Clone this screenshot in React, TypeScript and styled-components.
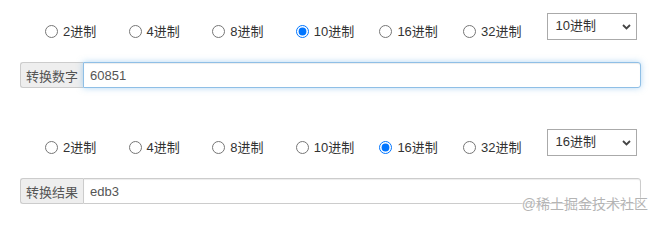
import { useState } from 'react';
import styled, { createGlobalStyle } from 'styled-components';

const GlobalStyle = createGlobalStyle`
  body {
    margin: 0;
    background: #fff;
    font-family: 'Liberation Sans', 'Noto Sans CJK SC', sans-serif;
    font-size: 13px;
    color: #333;
  }
`;

const bases = [2, 4, 8, 10, 16, 32];

const SPage = styled.div`
  position: relative;
  width: 659px;
  height: 225px;
  box-sizing: border-box;
  padding: 13px 18px 0 20px;
`;

const SBlock = styled.section<{ $offset: number }>`
  margin-top: ${(p) => p.$offset}px;
`;

const SOptionRow = styled.div`
  display: flex;
  align-items: center;
  height: 27px;
`;

const SRadioGroup = styled.div`
  display: grid;
  grid-template-columns: repeat(6, 83.6px);
  padding-left: 25px;
  margin-top: 10px;
`;

const SRadioLabel = styled.label`
  display: flex;
  align-items: center;
  gap: 5px;
  line-height: 18px;
  white-space: nowrap;
  cursor: pointer;
`;

const SRadio = styled.input`
  width: 13px;
  height: 13px;
  margin: 0;
`;

const SSelectWrap = styled.div`
  position: relative;
  width: 90px;
  height: 27px;
`;

const SSelect = styled.select`
  appearance: none;
  width: 100%;
  height: 100%;
  box-sizing: border-box;
  border: 1px solid #aaa;
  border-radius: 0;
  padding: 0 20px 3px 8px;
  background: #fff;
  color: #333;
  font-family: inherit;
  font-size: 13px;
  outline: none;
`;

const SChevron = styled.svg`
  position: absolute;
  right: 6px;
  top: 11px;
  width: 9px;
  height: 6px;
  pointer-events: none;
`;

const SInputGroup = styled.div`
  display: flex;
  height: 26px;
  margin-top: 22px;
`;

const SAddon = styled.span`
  display: flex;
  align-items: center;
  padding: 0 5px;
  background: #eee;
  border: 1px solid #ccc;
  border-right: none;
  border-radius: 3px 0 0 3px;
  color: #555;
  white-space: nowrap;
`;

const SInput = styled.input<{ $focused?: boolean }>`
  flex: 1;
  min-width: 0;
  box-sizing: border-box;
  height: 100%;
  padding: 0 6px;
  border: 1px solid ${(p) => (p.$focused ? '#8fbfe6' : '#ccc')};
  border-radius: 0 3px 3px 0;
  color: #555;
  font-family: inherit;
  font-size: 13px;
  outline: none;
  box-shadow: ${(p) =>
    p.$focused ? 'inset 0 1px 1px rgba(0,0,0,.075), 0 0 6px rgba(102,175,233,.5)' : 'inset 0 1px 1px rgba(0,0,0,.075)'};
`;

const SWatermark = styled.div`
  position: absolute;
  right: 11px;
  bottom: 12px;
  font-size: 14px;
  color: #b4b4b4;
  text-shadow: 0 0 2px #fff, 0 0 1px #fff;
  pointer-events: none;
`;

interface BaseBlockProps {
  name: string;
  label: string;
  value: string;
  base: number;
  offset: number;
  focused?: boolean;
  onBase: (b: number) => void;
}

const BaseBlock = ({ name, label, value, base, offset, focused, onBase }: BaseBlockProps) => (
  <SBlock $offset={offset}>
    <SOptionRow>
      <SRadioGroup>
        {bases.map((b) => (
          <SRadioLabel key={b}>
            <SRadio type='radio' name={name} checked={base === b} onChange={() => onBase(b)} />
            {b}进制
          </SRadioLabel>
        ))}
      </SRadioGroup>
      <SSelectWrap>
        <SSelect value={base} onChange={(e) => onBase(parseInt(e.target.value, 10))}>
          {bases.map((b) => (
            <option key={b} value={b}>
              {b}进制
            </option>
          ))}
        </SSelect>
        <SChevron viewBox='0 0 9 6'>
          <polyline points='1,1 4.5,4.5 8,1' fill='none' stroke='#444' strokeWidth='1.8' />
        </SChevron>
      </SSelectWrap>
    </SOptionRow>
    <SInputGroup>
      <SAddon>{label}</SAddon>
      <SInput $focused={focused} value={value} readOnly />
    </SInputGroup>
  </SBlock>
);

const App = () => {
  const [fromBase, setFromBase] = useState(10);
  const [toBase, setToBase] = useState(16);
  const input = '60851';
  const parsed = parseInt(input, fromBase);
  const result = Number.isNaN(parsed) ? '' : parsed.toString(toBase);

  return (
    <>
      <GlobalStyle />
      <SPage>
        <BaseBlock name='from' label='转换数字' value={input} base={fromBase} offset={0} focused onBase={setFromBase} />
        <BaseBlock name='to' label='转换结果' value={result} base={toBase} offset={41} onBase={setToBase} />
        <SWatermark>@稀土掘金技术社区</SWatermark>
      </SPage>
    </>
  );
};

export default App;
